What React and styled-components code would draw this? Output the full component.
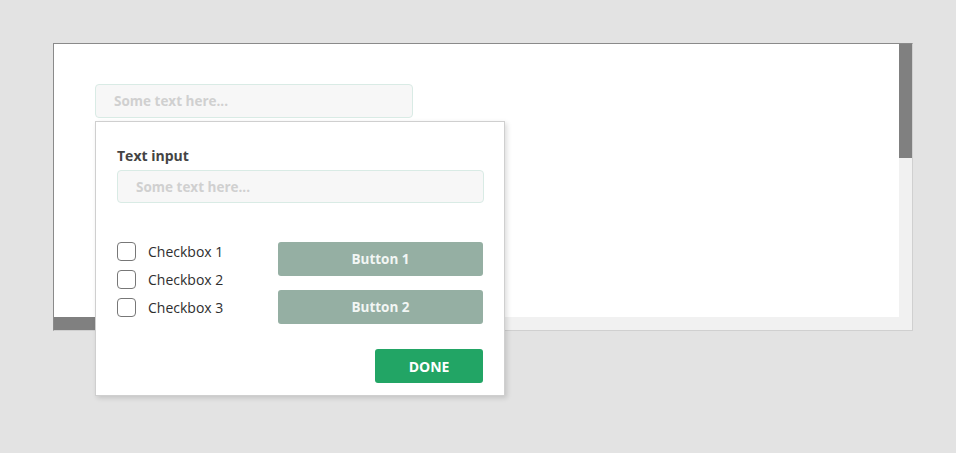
import styled, { createGlobalStyle } from "styled-components";

const GlobalStyle = createGlobalStyle`
  html, body {
    margin: 0;
    padding: 0;
    background: #e3e3e3;
    font-family: "Open Sans", "Noto Sans", sans-serif;
  }
`;

const Page = styled.div`
  box-sizing: border-box;
  min-height: 100vh;
  padding: 43px 0 0 53px;
`;

const Stage = styled.div`
  position: relative;
  width: 860px;
  height: 360px;
`;

/* scroll viewport with its two bars drawn as grid cells */
const Frame = styled.div`
  box-sizing: border-box;
  width: 860px;
  height: 288px;
  display: grid;
  grid-template-columns: 1fr 13px;
  grid-template-rows: 1fr 13px;
  border-style: solid;
  border-width: 1px;
  border-color: #8a8a8a #d0d0d0 #d0d0d0 #8a8a8a;
  background: #f1f1f1;
`;

const Viewport = styled.div`
  background: #fff;
  overflow: hidden;
  padding: 40px 41px;
`;

const Track = styled.div`
  display: flex;
  flex-direction: ${(p) => (p.$vertical ? "column" : "row")};
  background: #f1f1f1;
`;

const Thumb = styled.div`
  background: #808080;
  flex: none;
`;

const Corner = styled.div`
  background: #f1f1f1;
`;

const Input = styled.input`
  box-sizing: border-box;
  display: block;
  width: ${(p) => p.$width}px;
  height: ${(p) => p.$height}px;
  padding: 0 18px;
  border: 1px solid #d9ebe5;
  border-radius: 4px;
  background: #f7f7f7;
  font-family: inherit;
  font-size: 13.5px;
  font-weight: 700;
  color: #555;
  outline: none;

  &::placeholder {
    color: #d0d0d0;
  }
`;

const Dropdown = styled.div`
  position: absolute;
  top: 78px;
  left: 42px;
  box-sizing: border-box;
  width: 410px;
  height: 275px;
  padding: 25px 21px 0;
  background: #fff;
  border: 1px solid #cfcfcf;
  box-shadow: 2px 2px 5px rgba(0, 0, 0, 0.14);
`;

const Label = styled.div`
  font-size: 14px;
  font-weight: 700;
  line-height: 18px;
  color: #444;
  margin-bottom: 5px;
`;

const Options = styled.div`
  display: flex;
  justify-content: space-between;
  margin-top: 39px;
`;

const CheckList = styled.div`
  display: flex;
  flex-direction: column;
  gap: 9px;
`;

const CheckRow = styled.label`
  display: flex;
  align-items: center;
  gap: 12px;
  height: 19px;
  font-size: 14px;
  color: #2e2e2e;
`;

const Box = styled.span`
  box-sizing: border-box;
  width: 19px;
  height: 19px;
  border: 1px solid #777;
  border-radius: 4px;
  background: #fff;
`;

const ButtonStack = styled.div`
  display: flex;
  flex-direction: column;
  gap: 14px;
`;

const Button = styled.button`
  box-sizing: border-box;
  width: ${(p) => p.$width}px;
  height: 34px;
  border: none;
  border-radius: 3px;
  background: ${(p) => (p.$primary ? "#22a565" : "#95afa3")};
  color: ${(p) => (p.$primary ? "#fff" : "#f2f6f4")};
  font-family: inherit;
  font-size: ${(p) => (p.$primary ? 14 : 13.5)}px;
  font-weight: 700;
  padding: 0;
`;

const Footer = styled.div`
  display: flex;
  justify-content: flex-end;
  margin-top: 25px;
`;

export default function App() {
  return (
    <>
      <GlobalStyle />
      <Page>
        <Stage>
          <Frame>
            <Viewport>
              <Input $width={318} $height={34} placeholder="Some text here..." />
            </Viewport>
            <Track $vertical>
              <Thumb style={{ height: 114 }} />
            </Track>
            <Track>
              <Thumb style={{ width: 220 }} />
            </Track>
            <Corner />
          </Frame>
          <Dropdown>
            <Label>Text input</Label>
            <Input $width={367} $height={33} placeholder="Some text here..." />
            <Options>
              <CheckList>
                {["Checkbox 1", "Checkbox 2", "Checkbox 3"].map((t) => (
                  <CheckRow key={t}>
                    <Box />
                    {t}
                  </CheckRow>
                ))}
              </CheckList>
              <ButtonStack>
                <Button $width={205}>Button 1</Button>
                <Button $width={205}>Button 2</Button>
              </ButtonStack>
            </Options>
            <Footer>
              <Button $primary $width={108}>DONE</Button>
            </Footer>
          </Dropdown>
        </Stage>
      </Page>
    </>
  );
}
